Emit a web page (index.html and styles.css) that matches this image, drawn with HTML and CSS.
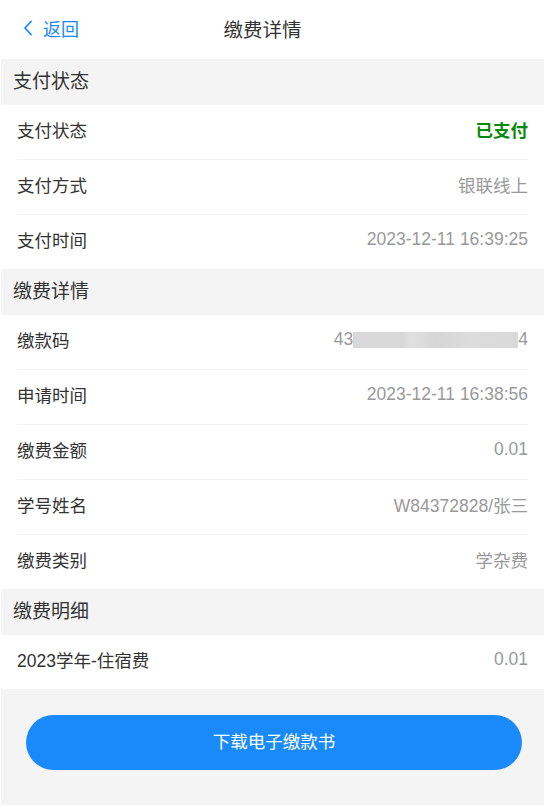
FILE: index.html
```html
<!DOCTYPE html>
<html lang="zh-CN">
<head>
<meta charset="utf-8">
<title>缴费详情</title>
<link rel="stylesheet" href="styles.css">
</head>
<body>
<div class="page">
  <header class="nav">
    <div class="back">
      <svg class="chev" width="10" height="16" viewBox="0 0 10 16"><path d="M8 1.5 L2 8 L8 14.5" fill="none" stroke="#1989fa" stroke-width="1.8" stroke-linecap="round" stroke-linejoin="round"/></svg>
      <span>返回</span>
    </div>
    <div class="title">缴费详情</div>
    <div></div>
  </header>

  <div class="sec-head">支付状态</div>
  <div class="list">
    <div class="row"><span class="label">支付状态</span><span class="value paid">已支付</span></div>
    <div class="row"><span class="label">支付方式</span><span class="value">银联线上</span></div>
    <div class="row"><span class="label">支付时间</span><span class="value">2023-12-11 16:39:25</span></div>
  </div>

  <div class="sec-head">缴费详情</div>
  <div class="list">
    <div class="row"><span class="label">缴款码</span><span class="value">43<span class="mask"></span>4</span></div>
    <div class="row"><span class="label">申请时间</span><span class="value">2023-12-11 16:38:56</span></div>
    <div class="row"><span class="label">缴费金额</span><span class="value">0.01</span></div>
    <div class="row"><span class="label">学号姓名</span><span class="value">W84372828/张三</span></div>
    <div class="row"><span class="label">缴费类别</span><span class="value">学杂费</span></div>
  </div>

  <div class="sec-head">缴费明细</div>
  <div class="list">
    <div class="row"><span class="label">2023学年-住宿费</span><span class="value">0.01</span></div>
  </div>

  <div class="footer">
    <button class="btn">下载电子缴款书</button>
  </div>
</div>
</body>
</html>
```
FILE: styles.css
```css
* { box-sizing: border-box; }
html, body { margin: 0; padding: 0; background: #fff; }
body {
  font-family: "Liberation Sans", "Noto Sans CJK SC", sans-serif;
  color: #333;
}
.page {
  margin-left: 1px;
  width: 543px;
}
.nav {
  height: 59px;
  display: grid;
  grid-template-columns: 1fr auto 1fr;
  align-items: center;
  margin-left: -1px;
  padding-bottom: 3px;
  background: #fff;
}
.back {
  display: flex;
  align-items: center;
  padding-left: 23px;
  color: #1989fa;
  font-size: 18px;
}
.chev { margin-right: 10px; }
.title {
  font-size: 19.5px;
  color: #333;
  margin-right: 19px;
}
.sec-head {
  height: 46px;
  background: #f4f4f4;
  padding-left: 12px;
  padding-bottom: 5px;
  display: flex;
  align-items: center;
  font-size: 19px;
  color: #333;
}
.list { background: #fff; }
.row {
  height: 55px;
  margin: 0 16px 0 16px;
  padding-bottom: 5px;
  border-bottom: 1px solid #f2f2f2;
  display: flex;
  align-items: center;
  justify-content: space-between;
  font-size: 17.5px;
}
.row:last-child { border-bottom: none; height: 54px; }
.label { color: #333; }
.value { color: #999; display: flex; align-items: center; font-size: 17.5px; }
.value.paid { color: #0a8a0a; font-weight: bold; }
.mask {
  display: inline-block;
  width: 165px;
  height: 16px;
  background: linear-gradient(90deg, #d8d8d8 0%, #d8d8d8 30%, #e0e0e0 35%, #d6d6d6 50%, #dcdcdc 70%, #d9d9d9 100%);
  filter: blur(0.6px);
}
.footer {
  background: #f4f4f4;
  height: 116px;
  padding: 26px 22px 0 25px;
}
.btn {
  width: 100%;
  height: 55px;
  border: none;
  border-radius: 28px;
  background: #1a8afa;
  color: #fff;
  font-family: "Liberation Sans", "Noto Sans CJK SC", sans-serif;
  font-size: 17.5px;
  padding-bottom: 5px;
  display: block;
}
```
